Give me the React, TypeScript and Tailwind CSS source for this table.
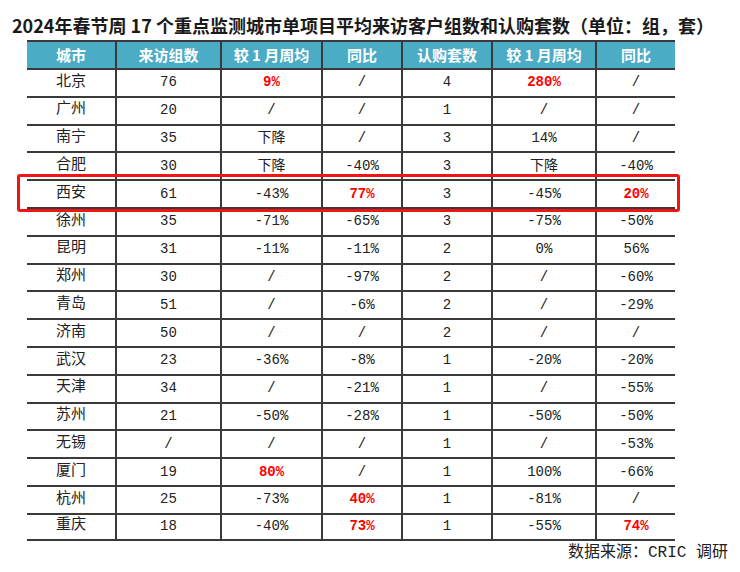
import React from "react";

type Cell = string | { v: string; red: true };
const R = (v: string): Cell => ({ v, red: true });

const rows: Cell[][] = [
  ["北京", "76", R("9%"), "/", "4", R("280%"), "/"],
  ["广州", "20", "/", "/", "1", "/", "/"],
  ["南宁", "35", "下降", "/", "3", "14%", "/"],
  ["合肥", "30", "下降", "-40%", "3", "下降", "-40%"],
  ["西安", "61", "-43%", R("77%"), "3", "-45%", R("20%")],
  ["徐州", "35", "-71%", "-65%", "3", "-75%", "-50%"],
  ["昆明", "31", "-11%", "-11%", "2", "0%", "56%"],
  ["郑州", "30", "/", "-97%", "2", "/", "-60%"],
  ["青岛", "51", "/", "-6%", "2", "/", "-29%"],
  ["济南", "50", "/", "/", "2", "/", "/"],
  ["武汉", "23", "-36%", "-8%", "1", "-20%", "-20%"],
  ["天津", "34", "/", "-21%", "1", "/", "-55%"],
  ["苏州", "21", "-50%", "-28%", "1", "-50%", "-50%"],
  ["无锡", "/", "/", "/", "1", "/", "-53%"],
  ["厦门", "19", R("80%"), "/", "1", "100%", "-66%"],
  ["杭州", "25", "-73%", R("40%"), "1", "-81%", "/"],
  ["重庆", "18", "-40%", R("73%"), "1", "-55%", R("74%")],
];

const headers = ["城市", "来访组数", "较 1 月周均", "同比", "认购套数", "较 1 月周均", "同比"];
const grid = "grid grid-cols-[90px_105px_101px_80px_90px_104px_78px]";
const font = { fontFamily: '"Liberation Mono", "Noto Sans CJK SC", monospace' };

export default function App() {
  return (
    <div className="w-[740px] h-[572px] bg-white text-black" style={{ fontFamily: '"Noto Sans CJK SC", sans-serif' }}>
      <div className="pl-[12px] pt-[12px] h-[40px] text-[18px] leading-[26px] font-bold text-[#1a1a1a] whitespace-nowrap">
        2024年春节周 17 个重点监测城市单项目平均来访客户组数和认购套数（单位：组，套）
      </div>
      <div className="relative pl-[27px]">
        <div className="w-[648px]">
          <div className={`${grid} h-[28px] bg-[#4bacc6] border-t-2 border-[#3a3a3a]`}>
            {headers.map((h, i) => (
              <div
                key={i}
                className={`flex items-center justify-center text-white font-bold text-[15px] ${i < 6 ? "border-r-2 border-[#3a3a3a]" : ""}`}
              >
                {h}
              </div>
            ))}
          </div>
          {rows.map((r, ri) => (
            <div key={ri} className={`${grid} h-[27.8px] border-t-2 border-[#3a3a3a] ${ri === rows.length - 1 ? "border-b-2" : ""}`}>
              {r.map((c, ci) => {
                const red = typeof c !== "string";
                const v = typeof c === "string" ? c : c.v;
                return (
                  <div
                    key={ci}
                    className={`flex items-center justify-center ${ci === 0 ? "text-[15px]" : "text-[14px]"} ${
                      red ? "text-[#ff0000] font-bold" : "text-[#222]"
                    } ${ci < 6 ? "border-r-2 border-[#3a3a3a]" : ""}`}
                    style={font}
                  >
                    {v}
                  </div>
                );
              })}
            </div>
          ))}
        </div>
        <div className="absolute left-[17px] top-[134px] w-[663px] h-[38px] border-[3px] border-[#f01414] rounded-[3px]" />
      </div>
      <div className="flex justify-end pr-[12px] h-[24px] leading-[24px] text-[16px] text-[#222]" style={font}>
        数据来源：CRIC 调研
      </div>
    </div>
  );
}
